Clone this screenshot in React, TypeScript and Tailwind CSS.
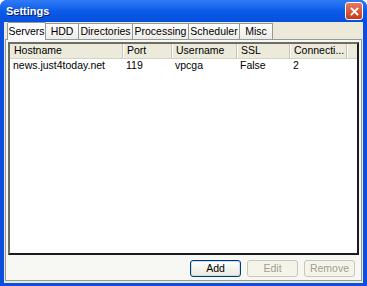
import React from "react";

const columns = [
  { label: "Hostname", width: "w-[113px]" },
  { label: "Port", width: "w-[49px]" },
  { label: "Username", width: "w-[65px]" },
  { label: "SSL", width: "w-[53px]" },
  { label: "Connecti...", width: "w-[57px]" },
];

const rows = [["news.just4today.net", "119", "vpcga", "False", "2"]];

const tabs = [
  { label: "Servers", width: "w-[39px]" },
  { label: "HDD", width: "w-[34px]" },
  { label: "Directories", width: "w-[55px]" },
  { label: "Processing", width: "w-[57px]" },
  { label: "Scheduler", width: "w-[52px]" },
  { label: "Misc", width: "w-[34px]" },
];

function CloseButton() {
  return (
    <div className="w-[18px] h-[18px] rounded-[3px] border border-white bg-gradient-to-b from-[#e9795c] to-[#c5391a] flex items-center justify-center">
      <svg width="9" height="9" viewBox="0 0 9 9">
        <path d="M1.5 1.5 L7.5 7.5 M7.5 1.5 L1.5 7.5" stroke="white" strokeWidth="1.8" strokeLinecap="square" />
      </svg>
    </div>
  );
}

function XpButton({ label, disabled }: { label: string; disabled?: boolean }) {
  return (
    <div
      className={
        "w-[51px] h-[17px] rounded-[3px] border flex items-center justify-center " +
        (disabled
          ? "border-[#c9c7ba] bg-[#f5f4ea] text-[#a19f8f]"
          : "border-[#003c74] bg-gradient-to-b from-white to-[#ece9d8] text-black shadow-[inset_0_0_0_1px_#c9dcf6]")
      }
    >
      {label}
    </div>
  );
}

export default function App() {
  return (
    <div className="w-[367px] h-[286px] bg-[#0b4ee0] rounded-t-[7px] flex flex-col font-['Liberation_Sans',Arial,sans-serif] text-[10.5px] text-black select-none">
      <div className="h-[22px] rounded-t-[7px] bg-gradient-to-b from-[#2f7cf6] via-[#0a5be8] to-[#0650dc] flex items-center justify-between pl-[6px] pr-[4px]">
        <span className="text-white font-bold text-[11px] [text-shadow:1px_1px_0_#0a1c6a]">Settings</span>
        <CloseButton />
      </div>
      <div className="flex-1 mx-[4px] mb-[3px] bg-[#ece9d8] flex flex-col px-[1px] pb-[2px]">
        <div className="flex items-end h-[17px] pl-[2px]">
          {tabs.map((t, i) =>
            i === 0 ? (
              <div
                key={t.label}
                className={t.width + " relative z-10 h-[18px] bg-[#fcfcfe] border-x border-t border-[#919b9c] rounded-t-[2px] -mb-[1px] flex items-center justify-center"}
              >
                {t.label}
              </div>
            ) : (
              <div
                key={t.label}
                className={t.width + " h-[16px] bg-gradient-to-b from-white to-[#ecebe6] border-x border-t border-[#919b9c] -ml-[1px] flex items-center justify-center"}
              >
                {t.label}
              </div>
            )
          )}
        </div>
        <div className="flex-1 bg-[#f7f7f4] border border-[#919b9c] flex flex-col px-[2px] pt-[2px]">
          <div className="h-[213px] bg-white border-2 border-l-[#6f6d63] border-t-[#6f6d63] border-r-[#1c1c1c] border-b-[#1c1c1c] flex flex-col">
            <div className="flex h-[15px] bg-[#ebeadb] border-b border-[#d6d2c2]">
              {columns.map((c) => (
                <div
                  key={c.label}
                  className={c.width + " flex items-center pl-[4px] border-r border-[#c7c5b2] shadow-[1px_0_0_white]"}
                >
                  {c.label}
                </div>
              ))}
              <div className="flex-1" />
            </div>
            {rows.map((r, i) => (
              <div key={i} className="flex h-[13px] items-center">
                {r.map((cell, j) => (
                  <div key={j} className={columns[j].width + " pl-[3px]"}>
                    {cell}
                  </div>
                ))}
              </div>
            ))}
          </div>
          <div className="flex justify-end gap-[6px] pt-[5px] pr-[4px]">
            <XpButton label="Add" />
            <XpButton label="Edit" disabled />
            <XpButton label="Remove" disabled />
          </div>
        </div>
      </div>
    </div>
  );
}
